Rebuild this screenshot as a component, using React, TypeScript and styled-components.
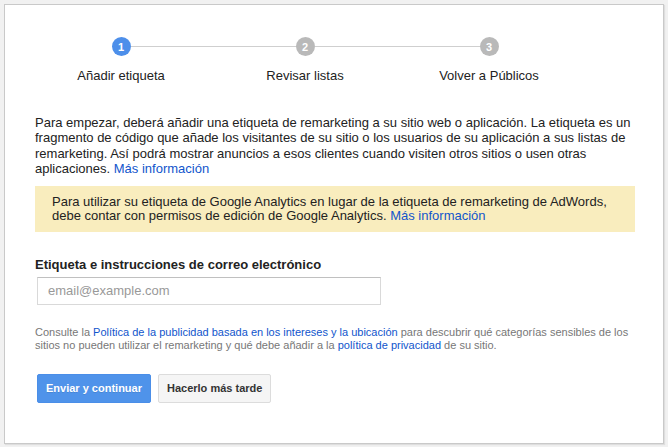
import React from "react";
import styled, { createGlobalStyle } from "styled-components";

const Global = createGlobalStyle`
  html, body { margin: 0; padding: 0; background: #f1f1f1; }
  body { font-family: "Liberation Sans", Arial, sans-serif; }
  * { box-sizing: border-box; }
`;

const Page = styled.div`
  width: 668px;
  height: 447px;
  padding: 4px 0 0 4px;
  overflow: hidden;
`;

const Panel = styled.div`
  width: 660px;
  height: 440px;
  background: #fff;
  border: 1px solid #c9c9c9;
  box-shadow: 1px 1px 1px rgba(0, 0, 0, 0.08);
`;

const Stepper = styled.div`
  display: flex;
  padding: 32px 0 0 24px;
`;

const StepCol = styled.div`
  width: 184px;
  display: flex;
  flex-direction: column;
  align-items: stretch;
`;

const CircleRow = styled.div`
  display: flex;
  align-items: center;
  height: 19px;
`;

const Seg = styled.div<{ $hidden?: boolean }>`
  flex: 1;
  height: 1px;
  background: ${(p) => (p.$hidden ? "transparent" : "#cfcfcf")};
`;

const Circle = styled.div<{ $active?: boolean }>`
  width: 19px;
  height: 19px;
  border-radius: 50%;
  background: ${(p) => (p.$active ? "#4d8fea" : "#b9b9b9")};
  color: #fff;
  font-size: 11px;
  font-weight: bold;
  display: flex;
  align-items: center;
  justify-content: center;
  flex: none;
`;

const StepLabel = styled.div`
  margin-top: 12px;
  text-align: center;
  font-size: 13px;
  line-height: 15px;
  color: #222;
  white-space: nowrap;
`;

const Body = styled.div`
  padding: 0 28px 0 30px;
`;

const Intro = styled.p`
  margin: 32px 0 0;
  font-size: 13px;
  line-height: 15.4px;
  color: #222;
`;

const Link = styled.a`
  color: #1155cc;
  text-decoration: none;
`;

const Notice = styled.div`
  margin-top: 9px;
  background: #f9edbe;
  padding: 9px 17px 8px;
  font-size: 13px;
  line-height: 14.5px;
  color: #222;
`;

const FieldLabel = styled.div`
  margin-top: 25px;
  font-size: 13px;
  font-weight: bold;
  line-height: 15px;
  color: #222;
`;

const Input = styled.input`
  display: block;
  margin: 5px 0 0 2px;
  width: 344px;
  height: 28px;
  border: 1px solid #d9d9d9;
  border-top-color: #c0c0c0;
  padding: 0 10px;
  font-family: "Liberation Sans", Arial, sans-serif;
  font-size: 13px;
  color: #222;
  outline: none;
  &::placeholder { color: #999; }
`;

const Fine = styled.p`
  margin: 21px 0 0;
  font-size: 11px;
  line-height: 13px;
  color: #777;
`;

const Actions = styled.div`
  display: flex;
  gap: 7px;
  margin: 22px 0 0 2px;
`;

const Button = styled.button<{ $primary?: boolean }>`
  height: 29px;
  padding: 0 8px;
  border-radius: 2px;
  font-family: "Liberation Sans", Arial, sans-serif;
  font-size: 11px;
  font-weight: bold;
  cursor: pointer;
  border: 1px solid ${(p) => (p.$primary ? "#4a8ee8" : "#dcdcdc")};
  background: ${(p) => (p.$primary ? "#4f93ea" : "#f5f5f5")};
  color: ${(p) => (p.$primary ? "#fff" : "#333")};
  text-shadow: ${(p) => (p.$primary ? "0 1px rgba(0,0,0,0.1)" : "none")};
`;

const steps = ["Añadir etiqueta", "Revisar listas", "Volver a Públicos"];

export default function App() {
  return (
    <>
      <Global />
      <Page>
        <Panel>
          <Stepper>
            {steps.map((s, i) => (
              <StepCol key={s}>
                <CircleRow>
                  <Seg $hidden={i === 0} />
                  <Circle $active={i === 0}>{i + 1}</Circle>
                  <Seg $hidden={i === steps.length - 1} />
                </CircleRow>
                <StepLabel>{s}</StepLabel>
              </StepCol>
            ))}
          </Stepper>
          <Body>
            <Intro>
              Para empezar, deberá añadir una etiqueta de remarketing a su sitio web o
              aplicación. La etiqueta es un fragmento de código que añade los visitantes de
              su sitio o los usuarios de su aplicación a sus listas de remarketing. Así podrá
              mostrar anuncios a esos clientes cuando visiten otros sitios o usen otras
              aplicaciones. <Link href="#">Más información</Link>
            </Intro>
            <Notice>
              Para utilizar su etiqueta de Google Analytics en lugar de la etiqueta de
              remarketing de AdWords, debe contar con permisos de edición de Google
              Analytics. <Link href="#">Más información</Link>
            </Notice>
            <FieldLabel>Etiqueta e instrucciones de correo electrónico</FieldLabel>
            <Input placeholder="email@example.com" />
            <Fine>
              Consulte la{" "}
              <Link href="#">Política de la publicidad basada en los intereses y la ubicación</Link>{" "}
              para descubrir qué categorías sensibles de los sitios no pueden utilizar el
              remarketing y qué debe añadir a la <Link href="#">política de privacidad</Link> de
              su sitio.
            </Fine>
            <Actions>
              <Button $primary>Enviar y continuar</Button>
              <Button>Hacerlo más tarde</Button>
            </Actions>
          </Body>
        </Panel>
      </Page>
    </>
  );
}
